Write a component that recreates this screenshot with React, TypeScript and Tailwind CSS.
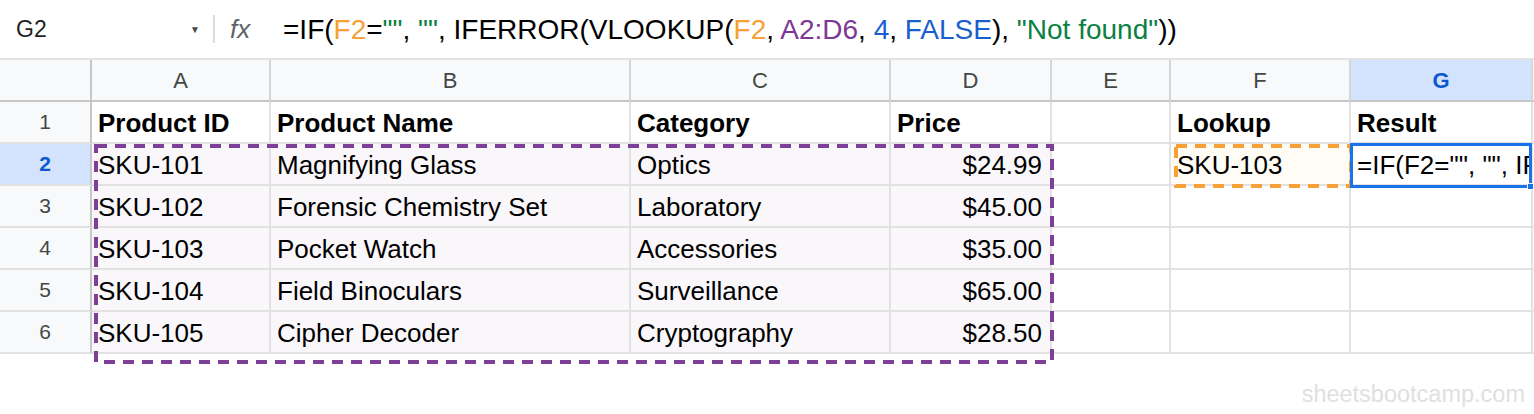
import React from "react";

const FONT = "font-['Liberation_Sans',Arial,sans-serif]";

const COLS = ["A", "B", "C", "D", "E", "F", "G"];

type Row = {
  cells: string[];
  bold?: boolean;
};

const ROWS: Row[] = [
  {
    cells: ["Product ID", "Product Name", "Category", "Price", "", "Lookup", "Result"],
    bold: true,
  },
  { cells: ["SKU-101", "Magnifying Glass", "Optics", "$24.99", "", "SKU-103", '=IF(F2="", "", IFERROR(VLOOKUP(F2, A2:D6, 4, FALSE), "Not found"))'] },
  { cells: ["SKU-102", "Forensic Chemistry Set", "Laboratory", "$45.00", "", "", ""] },
  { cells: ["SKU-103", "Pocket Watch", "Accessories", "$35.00", "", "", ""] },
  { cells: ["SKU-104", "Field Binoculars", "Surveillance", "$65.00", "", "", ""] },
  { cells: ["SKU-105", "Cipher Decoder", "Cryptography", "$28.50", "", "", ""] },
];

function FormulaBar() {
  return (
    <div className="flex h-[60px] items-center border-b-2 border-[#e3e3e3]">
      <div className="flex w-[213px] items-center pl-4 pr-[13px]">
        <span className="flex-1 text-[23px] text-[#1f1f1f]">G2</span>
        <span className="text-[10px] text-[#444746]">▼</span>
      </div>
      <div className="h-[28px] w-[2px] bg-[#dadce0]" />
      <span className="ml-[15px] w-[53px] text-[26px] italic text-[#5f6368]">fx</span>
      <div className="pt-[1px] text-[28px] text-black">
        =IF(<span className="text-[#f6a036]">F2</span>=
        <span className="text-[#0b8043]">""</span>, <span className="text-[#0b8043]">""</span>, IFERROR(VLOOKUP(
        <span className="text-[#f6a036]">F2</span>, <span className="text-[#7e3794]">A2:D6</span>,{" "}
        <span className="text-[#1a5fd0]">4</span>, <span className="text-[#1a5fd0]">FALSE</span>),{" "}
        <span className="text-[#0b8043]">"Not found"</span>))
      </div>
    </div>
  );
}

function Cell({
  r,
  c,
  value,
  bold,
}: {
  r: number;
  c: number;
  value: string;
  bold?: boolean;
}) {
  const inRange = r >= 2 && r <= 6 && c <= 3;
  const lookup = r === 2 && c === 5;
  const right = c === 3 && r >= 2;
  let bg = "bg-white";
  if (inRange) bg = "bg-[#faf7fb]";
  if (lookup) bg = "bg-[#fffcf6]";
  return (
    <div
      className={`flex h-[42px] items-center overflow-hidden whitespace-nowrap border-b-2 border-r-2 border-[#e2e2e2] px-[6px] pt-[2px] text-[26px] text-black ${bg} ${
        right ? "justify-end pr-[8px]" : ""
      } ${bold ? "font-bold" : ""}`}
    >
      {value}
    </div>
  );
}

export default function App() {
  return (
    <div className={`h-[414px] w-[1534px] overflow-hidden bg-white ${FONT}`}>
      <FormulaBar />
      <div className="relative">
        <div className="grid grid-cols-[92px_179px_360px_260px_161px_119px_180px_182px_1fr]">
          {/* column headers */}
          <div className="h-[42px] border-b-2 border-r-2 border-[#c7c7c7] bg-[#f8f9fa]" />
          {COLS.map((col) => (
            <div
              key={col}
              className={`flex h-[42px] items-center justify-center border-b-2 border-r-2 border-b-[#c7c7c7] border-r-[#d6d6d6] text-[22px] ${
                col === "G"
                  ? "bg-[#d3e3fd] font-bold text-[#0b57d0]"
                  : "bg-[#f8f9fa] text-[#444746]"
              }`}
            >
              {col}
            </div>
          ))}
          <div className="h-[42px] border-b-2 border-[#c7c7c7] bg-[#f8f9fa]" />

          {ROWS.map((row, i) => {
            const r = i + 1;
            return (
              <React.Fragment key={r}>
                <div
                  className={`flex h-[42px] items-center justify-center border-b-2 border-r-2 border-b-[#e2e2e2] border-r-[#c7c7c7] text-[21px] ${
                    r === 2
                      ? "bg-[#d3e3fd] font-bold text-[#0b57d0]"
                      : "bg-[#f8f9fa] text-[#444746]"
                  }`}
                >
                  {r}
                </div>
                {row.cells.map((v, c) => (
                  <Cell key={c} r={r} c={c} value={v} bold={row.bold} />
                ))}
                <div className="h-[42px] border-b-2 border-[#e2e2e2]" />
              </React.Fragment>
            );
          })}
        </div>

        {/* A2:D6 range outline */}
        <svg
          className="pointer-events-none absolute left-[94px] top-[84px]"
          width="960"
          height="220"
        >
          <rect
            x="2"
            y="2"
            width="956"
            height="216"
            fill="none"
            stroke="#7e3f98"
            strokeWidth="4"
            strokeDasharray="11 8"
          />
        </svg>

        {/* F2 range outline */}
        <svg
          className="pointer-events-none absolute left-[1174px] top-[84px]"
          width="179"
          height="44"
        >
          <rect
            x="2"
            y="2"
            width="175"
            height="40"
            fill="none"
            stroke="#f6a036"
            strokeWidth="4"
            strokeDasharray="11 8"
          />
        </svg>

        {/* active cell G2 */}
        <div className="pointer-events-none absolute left-[1350px] top-[83px] h-[45px] w-[182px] border-[3px] border-[#1a73e8]">
          <div className="absolute -bottom-[5px] -right-[5px] h-[7px] w-[7px] border border-white bg-[#1a73e8]" />
        </div>
      </div>

      <div className="mt-[23px] flex justify-end pr-[9px] text-[23.5px] text-[#e0e0e0]">
        sheetsbootcamp.com
      </div>
    </div>
  );
}
